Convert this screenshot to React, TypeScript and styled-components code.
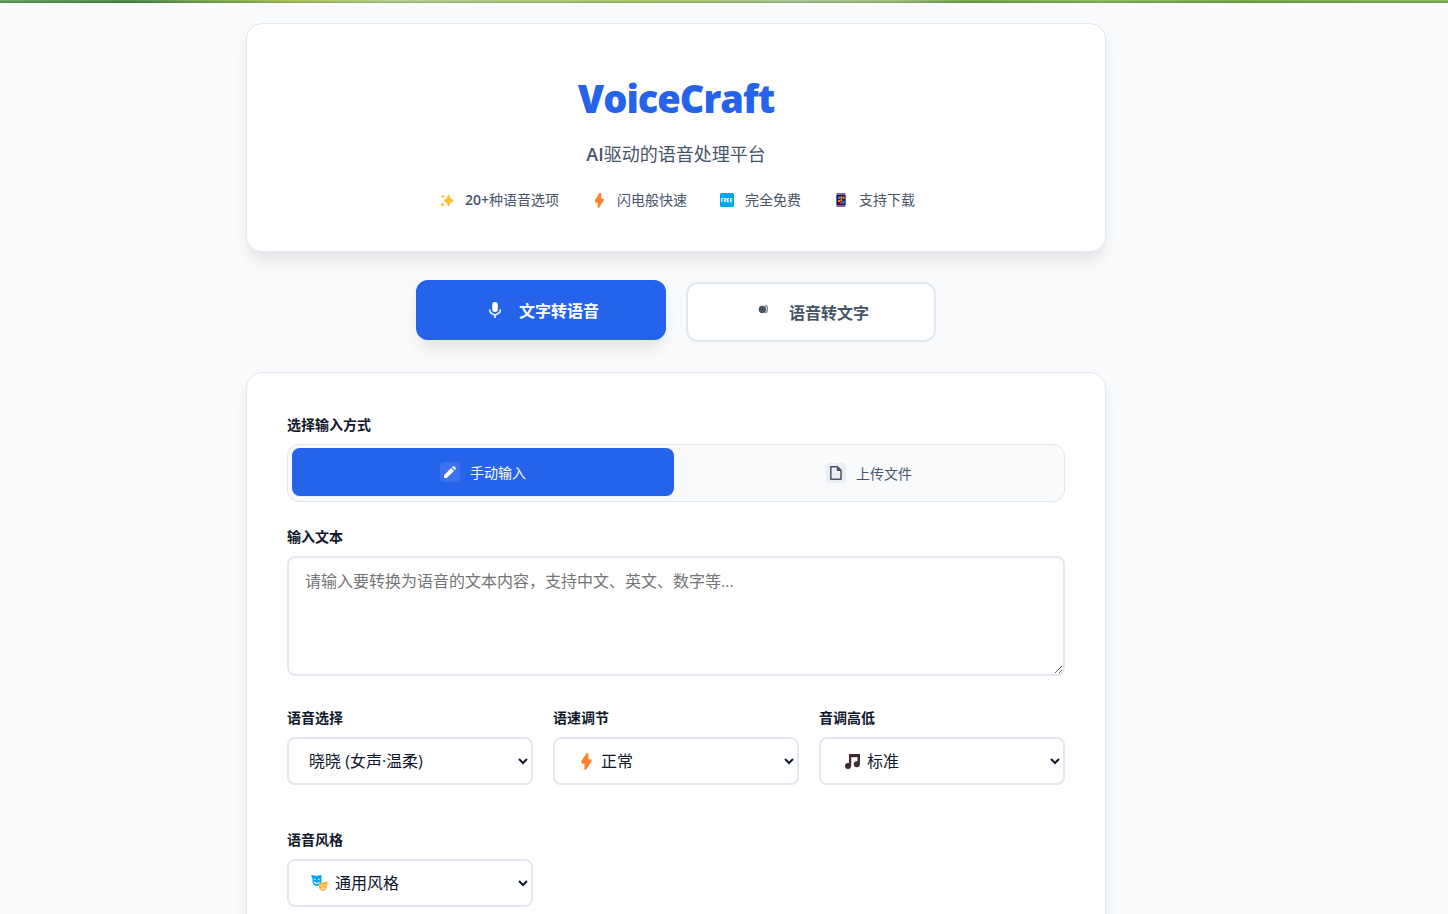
import React, { useState } from 'react';
import styled, { createGlobalStyle, css } from 'styled-components';

const color = {
  primary: '#2563eb',
  page: '#f8fafc',
  surface: '#ffffff',
  line: '#e2e8f0',
  text: '#0f172a',
  muted: '#475569',
};

const GlobalStyle = createGlobalStyle`
  *, *::before, *::after { box-sizing: border-box; }
  body {
    margin: 0;
    background: ${color.page};
    color: ${color.text};
    font-family: "Open Sans", "Noto Sans CJK SC", sans-serif;
    font-size: 16px;
  }
  button, select, textarea { font-family: inherit; }
`;

const Banner = styled.div`
  height: 3px;
  background:
    linear-gradient(rgba(255, 255, 255, 0.15), rgba(0, 40, 0, 0.18)),
    linear-gradient(90deg, #5c9a55 0%, #3f8040 9%, #6fa04a 14%, #a3c052 20%, #b3cf8c 27%,
      #a9c878 38%, #a3c464 44%, #a6c48a 55%, #9cbc78 62%, #66a044 67%, #86b75c 76%, #6ba33f 86%, #7fb457 100%);
`;

const Page = styled.main`
  max-width: 900px;
  margin: 0 auto;
  padding: 20px;
`;

const Viewport = styled.div`
  padding-right: 96px;
  @media (max-width: 1000px) { padding-right: 0; }
`;

const card = css`
  background: ${color.surface};
  border: 1px solid ${color.line};
  border-radius: 16px;
  padding: 40px;
`;

const Hero = styled.header`
  ${card}
  display: flex;
  flex-direction: column;
  align-items: center;
  text-align: center;
  box-shadow: 0 10px 15px -3px rgba(0, 0, 0, 0.1);
`;

const Title = styled.h1`
  margin: 0 0 8px;
  font-size: 38px;
  line-height: 68px;
  font-weight: 800;
  letter-spacing: -1px;
  color: ${color.primary};
`;

const Subtitle = styled.p`
  margin: 0 0 20px;
  font-size: 18px;
  line-height: 29px;
  font-weight: 400;
  color: ${color.muted};
`;

const Features = styled.ul`
  display: flex;
  flex-wrap: wrap;
  justify-content: center;
  gap: 12px 30px;
  margin: 0;
  padding: 0;
  list-style: none;
`;

const Feature = styled.li`
  display: flex;
  align-items: center;
  gap: 8px;
  font-size: 14px;
  line-height: 22px;
  font-weight: 400;
  color: ${color.muted};
`;

const Latin = styled.span`
  font-weight: 600;
`;

const IconSlot = styled.span<{ $size: number }>`
  display: inline-flex;
  align-items: center;
  justify-content: center;
  width: ${({ $size }) => $size}px;
  height: ${({ $size }) => $size}px;
`;

const Tabs = styled.nav`
  display: flex;
  justify-content: center;
  gap: 20px;
  margin: 30px 0;
`;

const Tab = styled.button<{ $active: boolean }>`
  display: flex;
  align-items: center;
  justify-content: center;
  gap: 12px;
  width: 250px;
  height: 60px;
  border: 2px solid ${({ $active }) => ($active ? color.primary : color.line)};
  border-radius: 12px;
  background: ${({ $active }) => ($active ? color.primary : color.surface)};
  color: ${({ $active }) => ($active ? '#ffffff' : color.muted)};
  font-size: 16px;
  font-weight: 600;
  cursor: pointer;
  ${({ $active }) =>
    $active &&
    css`
      transform: translateY(-2px);
      box-shadow: 0 10px 15px -3px rgba(0, 0, 0, 0.1);
    `}
`;

const Panel = styled.section`
  ${card}
  box-shadow: 0 10px 15px -3px rgba(0, 0, 0, 0.1);
`;

const Field = styled.div`
  margin-bottom: 23px;
`;

const labelText = css`
  display: block;
  margin: 0 0 8px;
  padding: 0;
  font-size: 14px;
  line-height: 23px;
  font-weight: 600;
  color: ${color.text};
`;

const Label = styled.label`
  ${labelText}
`;

const GroupLabel = styled.div`
  ${labelText}
`;

const Segments = styled.div`
  display: grid;
  grid-template-columns: 1fr 1fr;
  gap: 4px;
  padding: 4px;
  border: 1px solid ${color.line};
  border-radius: 12px;
  background: ${color.page};
`;

const Segment = styled.button<{ $active: boolean }>`
  display: flex;
  align-items: center;
  justify-content: center;
  gap: 10px;
  height: 48px;
  padding: 0;
  border: 0;
  border-radius: 8px;
  background: ${({ $active }) => ($active ? color.primary : 'transparent')};
  color: ${({ $active }) => ($active ? '#ffffff' : color.muted)};
  font-size: 14px;
  font-weight: 400;
  cursor: pointer;
  ${({ $active }) =>
    $active &&
    css`
      transform: translateY(-1px);
      box-shadow: 0 1px 2px rgba(0, 0, 0, 0.05);
    `}
`;

const Chip = styled.span<{ $active: boolean }>`
  display: inline-flex;
  align-items: center;
  justify-content: center;
  width: 20px;
  height: 20px;
  border-radius: 4px;
  background: ${({ $active }) => ($active ? 'rgba(255, 255, 255, 0.1)' : '#eaeef1')};
`;

const TextBox = styled.textarea`
  display: block;
  width: 100%;
  height: 120px;
  margin-bottom: 30px;
  padding: 12px 16px;
  border: 2px solid ${color.line};
  border-radius: 8px;
  background: ${color.surface};
  color: ${color.text};
  font-size: 16px;
  line-height: 22px;
  resize: vertical;
  &::placeholder { color: #757575; }
`;

const Options = styled.div`
  display: grid;
  grid-template-columns: repeat(auto-fill, minmax(200px, 1fr));
  column-gap: 20px;
  row-gap: 20px;
`;

const SelectBox = styled.div`
  position: relative;
`;

const SelectIcon = styled.span`
  position: absolute;
  left: 23px;
  top: 14px;
  display: flex;
  align-items: center;
  justify-content: center;
  width: 20px;
  height: 20px;
  pointer-events: none;
`;

const Select = styled.select<{ $icon: boolean }>`
  display: block;
  width: 100%;
  height: 48px;
  padding: 0 16px 0 ${({ $icon }) => ($icon ? 42 : 16)}px;
  border: 2px solid ${color.line};
  border-radius: 8px;
  background: ${color.surface};
  color: ${color.text};
  font-size: 16px;
`;

const Sparkles = () => (
  <svg width="14" height="14" viewBox="0 0 14 14" fill="#fcc13b" aria-hidden="true">
    <path d="M8.5 1 10.4 5 14 7.5 10.4 10 8.5 14 6.6 10 3.5 7.5 6.6 5Z" />
    <path d="M3 1.4 3.9 2.8 5.2 3.5 3.9 4.2 3 5.6 2.1 4.2 1 3.5 2.1 2.8ZM2.5 9.3 3.4 10.8 4.8 11.5 3.4 12.4 2.5 13.8 1.6 12.4.3 11.5 1.6 10.8Z" />
  </svg>
);

const Bolt = ({ size }: { size: number }) => (
  <svg width={size} height={size} viewBox="0 0 16 16" fill="#ff822d" aria-hidden="true">
    <path d="M8.4 1H10.2V6.4H12.8V8.6L8 15.8H6.6V10.4H4V8Z" />
  </svg>
);

const FreeBadge = () => (
  <svg width="16" height="14" viewBox="0 0 16 14" aria-hidden="true">
    <rect x="1" width="14" height="14" rx="1.5" fill="#00a6ed" />
    <path
      d="M2.5 9V5.5H4.5M2.5 7.2H4M5.6 9V5.5H7.2V7.2H5.6L7.2 9M10 5.5H8.5V9H10M8.5 7.2H10M13.3 5.5H11.6V9H13.3M11.6 7.2H13"
      fill="none"
      stroke="#fff"
      strokeWidth=".9"
    />
  </svg>
);

const Phone = () => (
  <svg width="10" height="14" viewBox="0 0 10 14" aria-hidden="true">
    <rect x=".5" width="9" height="14" rx=".8" fill="#7868a8" />
    <path d="M.5 2H9.5V12H.5Z" fill="#2c1040" />
    <path d="M2 3.5H4V6H2ZM6.3 8H8.5V10.5H6.3Z" fill="#00a6ed" />
    <path d="M4.5 3.5H6V5.5H4.5ZM4.5 6.3H6V8H4.5Z" fill="#fcc13b" />
    <path d="M6.5 3.5H8.5V6H6.5ZM2 7H4V9H2Z" fill="#ff822d" />
    <path d="M3.8 8.8H5.8V10.8H3.8Z" fill="#f8312f" />
  </svg>
);

const Mic = () => (
  <svg width="14" height="18" viewBox="0 0 14 18" aria-hidden="true">
    <rect x="4.2" y="1" width="5.6" height="10" rx="2.7" fill="currentColor" />
    <path d="M1.6 8.4A5.4 5.4 0 0 0 12.4 8.4M7 13.8V17" fill="none" stroke="currentColor" strokeWidth="1.7" opacity=".9" />
  </svg>
);

const Speaker = () => (
  <svg width="14" height="14" viewBox="0 0 14 14" aria-hidden="true">
    <circle cx="4.4" cy="4.4" r="3.7" fill="currentColor" />
    <path d="M6.8.8H8.4Q9.6 1.2 9.4 4.5 9.2 7.8 7 8" fill="none" stroke="currentColor" strokeWidth="1.2" opacity=".75" />
  </svg>
);

const Pencil = () => (
  <svg width="14" height="14" viewBox="0 0 14 14" fill="currentColor" aria-hidden="true">
    <path d="M1 10.2V13H3.8L10.9 5.9 8.1 3.1Z" />
    <path d="M8.8 2.4 10 1.2Q10.6.6 11.2 1.2L12.8 2.8Q13.4 3.4 12.8 4L11.6 5.2Z" opacity=".85" />
  </svg>
);

const FileIcon = () => (
  <svg width="14" height="16" viewBox="0 0 14 16" aria-hidden="true">
    <path d="M1.8 1.8H8.4L12 5.4V14.2H1.8Z" fill="none" stroke="currentColor" strokeWidth="1.5" strokeLinejoin="round" />
    <path d="M7.8 1.5V6H12.3Z" fill="currentColor" />
  </svg>
);

const Notes = () => (
  <svg width="20" height="20" viewBox="0 0 20 20" fill="#402a32" aria-hidden="true">
    <path d="M7 3H18V13H15.5V6.2H9.2V15H7Z" />
    <circle cx="6" cy="15" r="3" />
    <circle cx="14.8" cy="13.2" r="3" />
  </svg>
);

const Masks = () => (
  <svg width="20" height="20" viewBox="0 0 20 20" aria-hidden="true">
    <path d="M1.5 2Q6.5 3.6 11.5 2V8.5Q11 12.7 7 13 2.5 12.5 2.5 8V5L1.5 4.2Z" fill="#00a6ed" />
    <path d="M4 6.3H5.6M8 6.3H9.6M4.2 9Q7 12 9.5 9" fill="none" stroke="#fff" strokeWidth="1.1" />
    <path d="M9 10Q14 10 17.5 8V11L16.8 12.5Q17 17 13.6 18 9 17.8 9 13.8Z" fill="#ffb02e" />
    <path d="M10.8 12.6H12.4M14.4 12.2H15.8M11 16.2Q13.2 13.4 15 15.8" fill="none" stroke="#fff" strokeWidth="1" />
  </svg>
);

const features = [
  { icon: <Sparkles />, latin: '20+', text: '种语音选项' },
  { icon: <Bolt size={16} />, latin: '', text: '闪电般快速' },
  { icon: <FreeBadge />, latin: '', text: '完全免费' },
  { icon: <Phone />, latin: '', text: '支持下载' },
];

const selects = [
  { id: 'voice', label: '语音选择', value: '晓晓 (女声·温柔)', icon: null },
  { id: 'speed', label: '语速调节', value: '正常', icon: <Bolt size={18} /> },
  { id: 'pitch', label: '音调高低', value: '标准', icon: <Notes /> },
  { id: 'style', label: '语音风格', value: '通用风格', icon: <Masks /> },
];

export default function App() {
  const [mode, setMode] = useState<'tts' | 'stt'>('tts');
  const [source, setSource] = useState<'manual' | 'file'>('manual');

  return (
    <>
      <GlobalStyle />
      <Banner />
      <Viewport>
        <Page>
          <Hero>
            <Title>VoiceCraft</Title>
            <Subtitle><Latin>AI</Latin>驱动的语音处理平台</Subtitle>
            <Features>
              {features.map(({ icon, latin, text }) => (
                <Feature key={text}>
                  <IconSlot $size={20}>{icon}</IconSlot>
                  <span>{latin && <Latin>{latin}</Latin>}{text}</span>
                </Feature>
              ))}
            </Features>
          </Hero>

          <Tabs>
            <Tab type="button" $active={mode === 'tts'} onClick={() => setMode('tts')}>
              <IconSlot $size={24}><Mic /></IconSlot>
              文字转语音
            </Tab>
            <Tab type="button" $active={mode === 'stt'} onClick={() => setMode('stt')}>
              <IconSlot $size={24}><Speaker /></IconSlot>
              语音转文字
            </Tab>
          </Tabs>

          <Panel>
            <Field>
              <GroupLabel id="source-label">选择输入方式</GroupLabel>
              <Segments role="group" aria-labelledby="source-label">
                <Segment type="button" $active={source === 'manual'} onClick={() => setSource('manual')}>
                  <Chip $active={source === 'manual'}><Pencil /></Chip>
                  手动输入
                </Segment>
                <Segment type="button" $active={source === 'file'} onClick={() => setSource('file')}>
                  <Chip $active={source === 'file'}><FileIcon /></Chip>
                  上传文件
                </Segment>
              </Segments>
            </Field>

            <Label htmlFor="content">输入文本</Label>
            <TextBox id="content" placeholder="请输入要转换为语音的文本内容，支持中文、英文、数字等..." />

            <Options>
              {selects.map(({ id, label, value, icon }) => (
                <Field key={id}>
                  <Label htmlFor={id}>{label}</Label>
                  <SelectBox>
                    <Select id={id} $icon={icon !== null}>
                      <option>{value}</option>
                    </Select>
                    {icon && <SelectIcon>{icon}</SelectIcon>}
                  </SelectBox>
                </Field>
              ))}
            </Options>
          </Panel>
        </Page>
      </Viewport>
    </>
  );
}
